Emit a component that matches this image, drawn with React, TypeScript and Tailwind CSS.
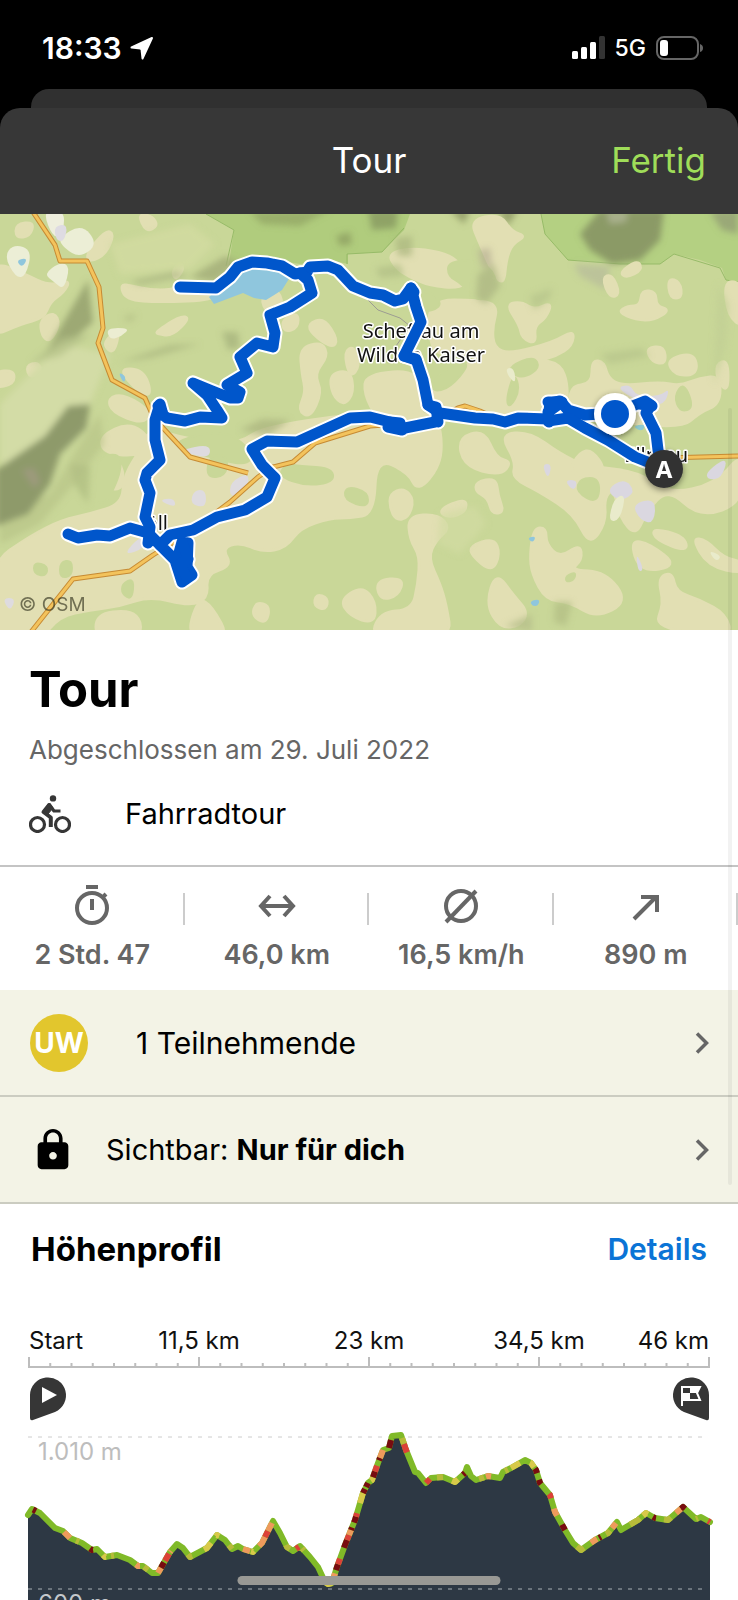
import type { ReactNode } from 'react';
import { MdLock } from 'react-icons/md';

// ─── MAP DATA ───

const GREEN = '#c9d798';
const BEIGE = '#e2dfb3';

const softShapes: { fill: string; d: string; opacity?: number }[] = [
  { fill: '#d3dca6', d: 'M0 190L60 130L110 140L90 190L40 240L0 250Z' },
  { fill: '#d0da9f', d: 'M110 30L190 10L215 30L190 55L120 60Z' },
  { fill: '#98a470', d: 'M45 140L88 66L93 108L75 124Z', opacity: 0.9 },
  { fill: '#b4c087', d: 'M30 150L60 124L92 120L60 142Z', opacity: 0.7 },
  { fill: '#a3ad78', d: 'M190 63L225 42L240 48L215 68Z', opacity: 0.8 },
  { fill: '#a9b580', d: 'M130 67L175 57L190 62L140 71Z', opacity: 0.7 },
  { fill: '#aab67f', d: 'M120 148L170 131L200 130L150 144Z', opacity: 0.7 },
  { fill: '#a4b07a', d: 'M222 118L238 118L240 134L228 136Z', opacity: 0.7 },
  { fill: '#b6c288', d: 'M124 102L136 100L134 106L126 108Z', opacity: 0.8 },
  { fill: '#b6c286', d: 'M50 280L80 230L100 200L104 230L74 270L40 310L0 330L0 300Z', opacity: 0.6 },
  { fill: '#8e9a6b', d: 'M-4 256L45 222L68 192L90 190L86 214L60 240L50 270L28 300L-4 312Z' },
  { fill: '#a19a82', d: 'M22 256L34 254L40 268L34 274Z', opacity: 0.8 },
  { fill: '#b2bf83', d: 'M70 250L90 252L88 290L74 270Z', opacity: 0.8 },
  { fill: '#a9b380', d: 'M478 60L494 50L500 72L486 90L476 84Z', opacity: 0.7 },
  { fill: '#b0a98f', d: 'M478 36L490 34L492 52L482 54Z', opacity: 0.6 },
  { fill: '#a9b57d', d: 'M395 24L412 22L412 42L398 42Z', opacity: 0.7 },
  { fill: '#b1bd84', d: 'M376 54L400 50L404 62L380 64Z', opacity: 0.7 },
  { fill: '#b7c48a', d: 'M530 82L552 74L550 84L534 96Z', opacity: 0.7 },
  { fill: '#b7c48a', d: 'M600 140L640 134L650 142L610 150Z', opacity: 0.7 },
  { fill: '#a9b47e', d: 'M240 216L262 205L290 206L268 222Z', opacity: 0.7 },
  { fill: '#b4bf86', d: 'M555 388L572 388L566 412L554 408Z', opacity: 0.8 },
  { fill: '#b8bf8c', d: 'M505 412L532 400L532 418Z', opacity: 0.8 },
  { fill: '#d2dba2', d: 'M440 300L475 292L486 310L460 340L438 330Z', opacity: 0.7 },
  { fill: '#c2cf95', d: 'M718 70L728 90L726 130L714 170L716 110Z', opacity: 0.8 },
];

const beigePatches = [
  'M-10 46L24 60L50 72L70 66L64 78L50 88L44 104L20 110L-10 124Z',
  'M16 10L34 8L30 22L16 24Z',
  'M40 106L54 98L60 110L50 128L42 122Z',
  'M120 70L132 72L150 76L172 76L186 70L215 76L214 86L160 88L126 86Z',
  'M156 118L180 102L190 104L172 122L158 120Z',
  'M172 58L180 48L184 54L176 66Z',
  'M138 0L152 2L158 12L146 18Z',
  'M86 40L106 16L114 20L106 40L90 48Z',
  'M-6 158L14 156L14 170L-6 174Z',
  'M26 152L38 148L42 158L30 164Z',
  'M108 124L120 114L114 140L104 132Z',
  'M118 154L144 156L152 182L138 178Z',
  'M108 184L124 180L152 198L142 210L112 198Z',
  'M100 222L130 208L152 226L142 242L104 240Z',
  'M102 246L122 248L124 276L104 274Z',
  'M308 110L324 104L338 126L332 134L312 120Z',
  'M300 134L322 128L328 142L314 160L322 178L310 204L298 196L306 178L302 160Z',
  'M330 160L350 156L354 178L344 192L332 180Z',
  'M344 138L354 132L360 152L350 164Z',
  'M260 84L276 74L284 90L268 100Z',
  'M282 106L298 98L298 114L284 118Z',
  'M388 40L410 34L440 38L458 46L468 66L460 74L430 72L408 62L396 54Z',
  'M470 6L500 0L512 18L526 22L512 30L506 46L504 70L494 62L480 30Z',
  'M506 90L522 88L534 96L552 88L546 104L534 112L536 130L522 124L520 112Z',
  'M618 98L628 92L640 92L642 76L656 78L656 92L670 96L654 106L636 106Z',
  'M602 64L612 60L620 80L610 84Z',
  'M620 58L638 46L642 56L626 64Z',
  'M668 64L680 68L682 84L670 84Z',
  'M646 134L664 132L666 150L652 148Z',
  'M666 146L694 138L698 160L676 162Z',
  'M724 66L744 70L744 114L728 102Z',
  'M716 150L728 146L728 178L718 168Z',
  'M592 146L604 148L608 164L622 172L660 168L680 172L700 164L720 162L720 190L700 198L680 216L570 200L570 172L592 170Z',
  'M428 86L480 86L498 92L492 114L494 134L510 140L554 128L574 116L572 132L556 142L540 146L560 150L568 170L566 204L500 206L440 200L424 180L440 176L456 160L470 148L480 140L440 142L430 130Z',
  'M366 160L420 156L432 200L378 206L364 180Z',
  'M-10 426L-10 350L30 322L62 306L90 300L122 290L124 262L140 236L150 214L190 226L240 230L260 214L350 200L434 196L442 222L440 252L418 278L408 258L376 244L374 300L350 304L330 304L300 314L286 334L262 338L240 328L222 334L232 352L206 360L208 384L190 392L150 382L120 392L90 396L60 402L40 426Z',
  'M96 400L130 396L142 408L138 426L96 426Z',
  'M198 384L212 392L230 426L186 426Z',
  'M256 388L270 392L266 410L252 402Z',
  'M316 380L328 384L326 396L314 392Z',
  'M340 386L362 372L376 388L374 410L350 402Z',
  'M458 224L484 216L496 244L512 248L500 262L464 252Z',
  'M476 268L496 264L498 282L504 298L492 300L488 284L476 278Z',
  'M390 280L404 274L414 286L408 304L396 306L390 294Z',
  'M438 296L466 284L466 298L448 304Z',
  'M408 302L438 300L450 314L436 326L428 344L440 370L446 390L452 426L370 426L380 398L412 396L418 370L420 342L410 326Z',
  'M470 332L494 324L500 340L492 358L472 342Z',
  'M496 358L514 382L528 398L520 412L500 414L486 390Z',
  'M530 340L534 314L546 314L546 330L560 344L580 330L582 346L570 356L606 358L628 388L596 404L570 388L546 386L532 360Z',
  'M500 220L530 218L560 240L586 252L640 258L668 280L716 270L744 236L744 288L700 304L668 274L646 298L636 322L620 304L614 274L604 284L606 308L590 332L574 300L540 278L512 264L516 248Z',
  'M630 326L650 330L678 352L640 358Z',
  'M652 314L684 322L688 338L656 326Z',
  'M658 364L672 358L676 378L700 386L726 400L732 424L654 414L664 390Z',
  'M692 324L706 326L724 344L744 348L744 360L708 352Z',
  'M376 366L404 364L398 382L380 386Z',
  'M580 238L592 236L606 256L592 264L568 258Z',
];

const greenPatches = [
  'M300 252L332 254L334 268L306 272L278 262L286 250Z',
  'M92 246L118 238L122 254L110 284L98 292L88 270Z',
  'M346 272L368 278L368 294L344 286Z',
  'M170 232L196 220L230 218L254 240L246 252L206 242Z',
  'M210 240L228 242L226 262L206 264Z',
  'M34 348L48 352L46 362L34 360Z',
  'M60 348L72 346L72 362L60 364Z',
  'M122 370L134 364L132 386L122 380Z',
  'M448 48L474 46L494 56L498 80L476 88L462 70L448 62Z',
  'M510 152L534 142L540 154L524 164L512 160Z',
  'M434 164L458 148L470 150L450 174L432 178Z',
  'M506 186L514 158L520 176L510 194Z',
  'M684 168L694 194L680 198L674 182Z',
  'M580 264L600 264L598 290L576 278Z',
  'M396 78L430 76L444 92L420 100L396 94Z',
  'M566 362L576 358L574 366L566 368Z',
];

const palePatches: { fill: string; d: string }[] = [
  { fill: '#eceed6', d: 'M4 42L14 30L32 36L26 62L16 64Z' },
  { fill: '#eceed6', d: 'M44 60L60 48L70 52L64 76L54 68Z' },
  { fill: '#eceed6', d: 'M58 24L82 10L98 30L80 44L64 34Z' },
  { fill: '#eeeedd', d: 'M42 -4L64 -4L64 16L54 26Z' },
  { fill: '#ecedd2', d: 'M106 114L130 114L122 122L110 126Z' },
  { fill: '#dedbe2', d: 'M54 12L68 10L64 28L56 26Z' },
  { fill: '#dedbdf', d: 'M230 268L250 258L246 278L230 284Z' },
  { fill: '#dedbdf', d: 'M194 276L206 276L206 294L190 290Z' },
  { fill: '#dedbdf', d: 'M158 286L174 284L176 294Z' },
  { fill: '#dedbdf', d: 'M180 236L210 230L210 244L190 240Z' },
  { fill: '#dedbdf', d: 'M122 342L142 320L146 334Z' },
  { fill: '#dedbdf', d: 'M2 384L16 384L10 398Z' },
  { fill: '#dad7e0', d: 'M606 276L624 264L636 278L620 288Z' },
  { fill: '#dad7e0', d: 'M632 290L656 284L654 310L640 306Z' },
  { fill: '#e9ebcb', d: 'M614 284L626 280L620 306L608 308Z' },
  { fill: '#dad7e0', d: 'M706 258L728 242L722 264L708 266Z' },
  { fill: '#dad7e0', d: 'M542 250L552 250L548 266Z' },
  { fill: '#dad7e0', d: 'M564 266L578 266L574 278Z' },
  { fill: '#dad7e0', d: 'M616 174L630 170L636 182L660 182L670 174L664 192L640 188Z' },
  { fill: '#e9ebcb', d: 'M506 154L514 154L516 170L508 162Z' },
  { fill: '#dad7e0', d: 'M636 338L644 356L638 358Z' },
  { fill: '#e9ebcb', d: 'M708 336L722 342L716 348Z' },
  { fill: '#8fc6dd', d: 'M16 46L28 44L22 54Z' },
  { fill: '#8fc6dd', d: 'M118 158L126 162L124 170Z' },
  { fill: '#8fc6dd', d: 'M530 387L540 385L538 392L532 392Z' },
  { fill: '#8fc6dd', d: 'M527 324L536 322L533 329Z' },
  { fill: '#8fcbd0', d: 'M632 212L646 210L642 218Z' },
];

const roads = [
  'M33 -2L55 31L60 47L87 47L99 73L103 114L98 129L112 166L145 184L152 200L163 214L190 243L248 259',
  'M31 418L73 365L130 357L153 341L190 318L230 288L258 263L273 253L293 248L315 229L370 212L400 210',
  'M440 204L458 194L465 192L480 197L500 206',
  'M664 244L738 242',
];

const routes = [
  'M180 73L216 74L230 63L238 53L252 48L267 49L282 52L295 60L307 58L310 53L328 52L338 56L353 72L370 79L383 81L395 87L403 85L411 74L416 93L421 108L411 128L404 142L416 145L423 166L428 191L440 199L475 204L493 205L505 208L518 204L548 205L550 189L560 187L568 196L585 201L615 199L635 191L645 187L651 191L646 199L656 219L658 236L663 254',
  'M548 207L568 204L585 214L608 226L635 243L663 254',
  'M440 199L435 208L405 214L396 214L390 208L370 203L350 204L297 228L267 227L252 235L262 251L275 264L267 283L245 296L217 303L193 316L170 321L160 331L175 346L182 368L192 361L187 353L188 329L182 328L177 346',
  'M160 331L150 321L148 329L150 313L145 303L150 279L145 266L147 259L160 246L155 226L155 206L160 190L163 201L167 204L185 207L200 203L222 204L217 196L207 181L193 169L210 176L230 184L238 184L240 178L227 171L247 159L240 143L257 129L273 133L275 119L270 101L290 93L312 79L308 66L300 59',
  'M68 320L78 324L97 321L110 322L130 314L148 319',
];

// small scribbles where the track doubles back on itself
const knots = [
  'M411 74L414 78M404 142L416 146M428 191L436 193L438 208M390 208L400 209L402 216L388 213',
  'M548 188L562 188L548 198L549 208M640 190L652 192M183 330L188 345L180 350L186 362M158 192L162 198',
];

// rounds a closed polygon by running quadratic curves through its edge midpoints
const blob = (d: string) => {
  const pts = d.slice(1, -1).split('L').map((p) => p.split(' ').map(Number));
  const mid = (i: number) => {
    const [a, b] = [pts[i % pts.length], pts[(i + 1) % pts.length]];
    return `${(a[0] + b[0]) / 2} ${(a[1] + b[1]) / 2}`;
  };
  return `M${mid(0)}${pts.map((_, i) => {
    const [x, y] = pts[(i + 1) % pts.length];
    return `Q${x} ${y} ${mid(i + 1)}`;
  }).join('')}Z`;
};

function TourMap() {
  return (
    <svg viewBox="0 0 738 416" className="block w-full bg-[#c9d798]" role="img" aria-label="Karte">
      <defs>
        <filter id="soft" x="-20%" y="-20%" width="140%" height="140%">
          <feGaussianBlur stdDeviation="3" />
        </filter>
        <filter id="halo" x="-50%" y="-50%" width="200%" height="200%">
          <feDropShadow dx="0" dy="2" stdDeviation="3" floodOpacity="0.45" />
        </filter>
      </defs>
      <rect width="738" height="416" fill={GREEN} />

      {/* Nature reserves */}
      <path d="M206 0L234 16L228 56L262 44L300 50L330 46L348 50V40L382 38L404 16L410 0Z" fill="#b0cc7d" />
      <path d="M541 0L545 20L568 46L620 50L660 50L674 40L700 46L722 54L726 66L738 68V0Z" fill="#b4d082" />
      <path d="M206 0L234 16L226 52M347 50V40L382 38L404 14M541 0L545 20L568 46L620 50L660 50L674 40L720 54L726 66L738 68" fill="none" stroke="#97bb68" strokeWidth="1" />
      <g filter="url(#soft)">
        <path d="M580 20L600 -4H664L660 26L640 46L612 50L590 36Z" fill="#8b9a66" />
        <path d="M606 -2H628L626 8L610 10Z" fill="#a9b08c" />
        <path d="M710 -2L738 -4V20L722 16Z" fill="#9aa877" />
        <path d="M250 -2L330 -4L300 12L262 10Z" fill="#93a765" opacity="0.8" />
        <path d="M336 22L350 18L352 30L340 32Z" fill="#8fa062" opacity="0.8" />
        <path d="M368 -4L398 -4L396 14L372 16Z" fill="#8fa366" />
        <path d="M574 50L610 52L606 76L580 62Z" fill="#bcc39a" />
        <path d="M450 -4L470 -4L464 10ZM498 -4L518 -4L508 12Z" fill="#98a36d" />
      </g>

      {/* Meadows and woods */}
      <g fill={BEIGE} stroke={BEIGE} strokeWidth="3">
        {beigePatches.map((d) => <path key={d} d={blob(d)} />)}
      </g>
      <g fill={GREEN} stroke={GREEN} strokeWidth="2">
        {greenPatches.map((d) => <path key={d} d={blob(d)} />)}
      </g>
      {palePatches.map((p) => <path key={p.d} d={blob(p.d)} fill={p.fill} />)}
      <g filter="url(#soft)">
        {softShapes.map((p) => <path key={p.d} d={p.d} fill={p.fill} opacity={p.opacity} />)}
      </g>
      <path d="M209 83L221 71L240 52L262 46L284 52L292 60L282 76L266 86L254 84L243 79L214 90Z" fill="#8fc6dd" />
      <path d="M366 84L378 96L400 104L410 112L396 132" fill="none" stroke="#9c9c92" strokeWidth="1" />

      {/* Roads */}
      <g fill="none" strokeLinejoin="round">
        {roads.map((d) => <path key={d} d={d} stroke="#c68a33" strokeWidth="5" />)}
        {roads.map((d) => <path key={d} d={d} stroke="#f3c35c" strokeWidth="3" />)}
      </g>

      {/* Place names */}
      <g fontFamily='"Noto Sans", sans-serif' fontSize="20" fill="#111" stroke="#fff" strokeWidth="3" strokeLinejoin="round" paintOrder="stroke">
        <text x="421" y="124" textAnchor="middle">Scheffau am</text>
        <text x="421" y="148" textAnchor="middle">Wilden Kaiser</text>
        <text x="168" y="316" textAnchor="end">öll</text>
        <text x="688" y="248" textAnchor="end">Ellmau</text>
      </g>

      {/* Track */}
      <g fill="none" strokeLinejoin="round" strokeLinecap="round">
        {[...routes, ...knots].map((d) => <path key={d} d={d} stroke="#fff" strokeWidth="15" />)}
        {[...routes, ...knots].map((d) => <path key={d} d={d} stroke="#0056cb" strokeWidth="11" />)}
      </g>

      <circle cx="615" cy="200" r="21" fill="#fff" filter="url(#halo)" />
      <circle cx="615" cy="200" r="14" fill="#0056cb" />
      <circle cx="664" cy="255" r="19" fill="#333" filter="url(#halo)" />
      <text x="664" y="264" textAnchor="middle" fontFamily='"Noto Sans", sans-serif' fontWeight="700" fontSize="24" fill="#fff">A</text>
      <text x="19" y="397" fontFamily="Inter, sans-serif" fontSize="19" fill="#33331f" fillOpacity="0.65">© OSM</text>
    </svg>
  );
}

// ─── ELEVATION PROFILE ───

const profile: [number, number][] = [
  [28, 195], [32, 189], [40, 193], [55, 208], [63, 211], [70, 218], [82, 223], [92, 230], [97, 229], [105, 237],
  [117, 235], [130, 240], [138, 246], [143, 246], [152, 253], [158, 253], [170, 232], [177, 224], [183, 228],
  [190, 237], [207, 228], [217, 215], [225, 220], [232, 229], [238, 226], [243, 229], [253, 232], [262, 223],
  [273, 201], [280, 213], [287, 227], [293, 231], [300, 226], [310, 237], [318, 247], [325, 262], [328, 264],
  [332, 263], [337, 247], [345, 225], [355, 200], [363, 173], [368, 163], [372, 160], [378, 143], [383, 130],
  [389, 128], [392, 116], [401, 115], [406, 130], [415, 152], [418, 153], [426, 163], [431, 158], [443, 157],
  [455, 162], [465, 153], [467, 147], [471, 156], [476, 160], [488, 156], [500, 158], [503, 152], [511, 148],
  [525, 140], [531, 143], [536, 150], [540, 163], [550, 175], [555, 192], [565, 210], [573, 223], [581, 230],
  [595, 220], [608, 213], [617, 202], [621, 210], [638, 200], [646, 193], [655, 198], [668, 200], [683, 187],
  [696, 199], [701, 197], [710, 202],
];

const grades = {
  easy: '#b7bb3a',
  mild: '#d8c94a',
  steep: '#ee9a5c',
  hard: '#dc4138',
  extreme: '#780c10',
};

const steepParts: [number, number, keyof typeof grades][] = [
  [33, 36, 'extreme'], [64, 70, 'steep'], [76, 79, 'easy'], [90, 93, 'extreme'], [103, 106, 'mild'], [111, 114, 'easy'],
  [136, 140, 'steep'], [144, 148, 'easy'], [158, 161, 'steep'], [161, 164, 'extreme'], [165, 169, 'hard'], [170, 171, 'steep'],
  [188, 192, 'easy'], [204, 211, 'mild'], [216, 219, 'mild'], [229, 232, 'easy'], [243, 250, 'steep'], [251, 254, 'mild'],
  [259, 265, 'steep'], [265, 268, 'hard'], [268, 272, 'steep'], [286, 290, 'easy'], [296, 299, 'hard'], [302, 304, 'easy'],
  [326, 332, 'mild'], [333, 335, 'steep'], [336, 338, 'extreme'], [338, 340, 'hard'], [344, 347, 'extreme'], [347, 349, 'hard'],
  [349, 351, 'steep'], [351, 352, 'extreme'], [354, 356, 'extreme'], [356, 357, 'hard'], [360, 363, 'mild'], [363, 365, 'extreme'],
  [366, 368, 'extreme'], [371, 373, 'mild'], [373, 375, 'extreme'], [375, 377, 'hard'], [379, 380, 'extreme'], [380, 383, 'steep'],
  [389, 391, 'extreme'], [402, 404, 'easy'], [404, 407, 'hard'], [426, 430, 'hard'], [437, 443, 'easy'], [452, 458, 'mild'],
  [463, 465, 'extreme'], [479, 484, 'easy'], [486, 491, 'steep'], [505, 508, 'easy'], [511, 520, 'mild'], [530, 534, 'mild'],
  [535, 537, 'extreme'], [539, 541, 'extreme'], [549, 551, 'hard'], [554, 557, 'steep'], [562, 565, 'extreme'],
  [577, 584, 'easy'], [591, 597, 'steep'], [599, 601, 'extreme'], [606, 610, 'easy'], [612, 616, 'steep'], [630, 640, 'easy'],
  [643, 648, 'mild'], [653, 656, 'extreme'], [664, 671, 'easy'], [676, 681, 'steep'], [681, 685, 'extreme'], [696, 698, 'easy'],
  [708, 710, 'hard'],
];

const heightAt = (x: number) => {
  const i = Math.max(1, profile.findIndex(([px]) => px >= x));
  const [x0, y0] = profile[i - 1];
  const [x1, y1] = profile[i];
  return y0 + ((y1 - y0) * (x - x0)) / (x1 - x0);
};

const partPoints = (from: number, to: number) =>
  [[from, heightAt(from)], ...profile.filter(([x]) => x > from && x < to), [to, heightAt(to)]].join(' ');

const axisLabels: { x: number; text: string; anchor: 'start' | 'middle' | 'end' }[] = [
  { x: 29, text: 'Start', anchor: 'start' },
  { x: 199, text: '11,5 km', anchor: 'middle' },
  { x: 369, text: '23 km', anchor: 'middle' },
  { x: 539, text: '34,5 km', anchor: 'middle' },
  { x: 709, text: '46 km', anchor: 'end' },
];

const ticks = Array.from({ length: 33 }, (_, i) => ({ x: 29 + i * 21.25, major: i % 8 === 0 }));

function ElevationChart() {
  const line = profile.join(' ');
  return (
    <svg viewBox="0 0 738 320" className="block w-full" fontFamily="Inter, sans-serif" fontSize="24" role="img" aria-label="Höhenprofil">
      {axisLabels.map((l) => (
        <text key={l.text} x={l.x} y="29" textAnchor={l.anchor} fill="#111">{l.text}</text>
      ))}
      <g stroke="#bdbdbd" strokeWidth="2">
        <path d="M28 47H710" />
        {ticks.map((t) => <path key={t.x} d={`M${t.x} 47V${t.major ? 37 : 43}`} />)}
      </g>

      {/* Start and finish pins */}
      <path d="M30 75A18 18 0 1 1 55 92L33 100Q30 101 30 98Z" fill="#363636" />
      <path d="M42 67V83L57 75Z" fill="#fff" />
      <path d="M709 75A18 18 0 1 0 684 92L706 100Q709 101 709 98Z" fill="#363636" />
      <path d="M682 66V86M682 67H700L697 73L700 80H682" fill="none" stroke="#fff" strokeWidth="2" />
      <path d="M690 67H700L697 73H690ZM683 73H690V80H683Z" fill="#fff" />

      <path d="M28 117H706" stroke="#ccc" strokeWidth="1" strokeDasharray="4 6" />
      <text x="38" y="140" fill="#bdbdbd">1.010 m</text>
      <polygon points={`28,320 ${line} 710,320`} fill="#2d3844" />
      <path d="M28 269H706" stroke="#aab0b5" strokeWidth="1" strokeDasharray="4 6" />
      <text x="38" y="292" fill="#c4c8cc">600 m</text>

      <g fill="none" strokeWidth="6" strokeLinejoin="round">
        <polyline points={line} stroke="#80ba28" strokeLinecap="round" />
        {steepParts.map(([from, to, grade]) => (
          <polyline key={from} points={partPoints(from, to)} stroke={grades[grade]} />
        ))}
      </g>
    </svg>
  );
}

// ─── ICONS ───

function LocationIcon() {
  return (
    <svg viewBox="0 0 24 24" className="size-6" fill="#fff" stroke="#fff" strokeWidth="2" strokeLinejoin="round" aria-hidden="true">
      <path d="M22 2L12.500 22.500L11.500 13.500L10.500 12.500L1.500 11.500Z" />
    </svg>
  );
}

function SignalIcon() {
  return (
    <svg viewBox="0 0 33 23" className="h-[23px] w-[33px]" fill="#fff" aria-hidden="true">
      <rect y="15" width="6" height="8" rx="1.500" />
      <rect x="9" y="11" width="6" height="12" rx="1.500" />
      <rect x="18" y="6" width="6" height="17" rx="1.500" />
      <rect x="27" width="6" height="23" rx="1.500" fill="#333" />
    </svg>
  );
}

function BatteryIcon() {
  return (
    <svg viewBox="0 0 48 24" className="h-6 w-12" aria-hidden="true">
      <rect x="1" y="1" width="41" height="22" rx="7" fill="none" stroke="#666" strokeWidth="2" />
      <rect x="4" y="4" width="8" height="16" rx="3" fill="#fff" />
      <path d="M44 8Q47 9 47 12T44 16Z" fill="#666" />
    </svg>
  );
}

function BikeIcon() {
  return (
    <svg viewBox="0 0 42 38" className="h-[38px] w-[42px]" fill="none" stroke="#363636" aria-hidden="true">
      <circle cx="8.500" cy="29.500" r="7" strokeWidth="3.200" />
      <circle cx="33.500" cy="29.500" r="7" strokeWidth="3.200" />
      <circle cx="24" cy="3.400" r="3.200" fill="#363636" stroke="none" />
      <path d="M20.500 9.500L14.500 17L21.800 22.500V32" strokeWidth="4" strokeLinejoin="round" />
      <path d="M20 9L25 16H31.500" strokeWidth="3.200" strokeLinejoin="round" />
      <path d="M20 8L24 13L19 19L14 17Z" fill="#363636" strokeWidth="1" />
    </svg>
  );
}

function StatIcon({ children }: { children: ReactNode }) {
  return (
    <svg viewBox="0 0 48 48" className="size-12" fill="none" stroke="#666" strokeWidth="4" aria-hidden="true">
      {children}
    </svg>
  );
}

function Chevron() {
  return (
    <svg viewBox="0 0 14 22" className="h-[22px] w-3.5" fill="none" stroke="#666" strokeWidth="3.500" aria-hidden="true">
      <path d="M2 1.500L11.500 11L2 20.500" />
    </svg>
  );
}

const stats: { value: string; label: string; icon: ReactNode }[] = [
  {
    label: 'Dauer',
    value: '2 Std. 47',
    icon: <><circle cx="25" cy="23" r="15" /><path d="M19 2H31M25 14V25M35 13L39 9" /></>,
  },
  {
    label: 'Distanz',
    value: '46,0 km',
    icon: <path d="M10 21H40M18 11L9 21L18 31M32 11L41 21L32 31" />,
  },
  {
    label: 'Durchschnitt',
    value: '16,5 km/h',
    icon: <><circle cx="25" cy="21" r="15" /><path d="M10 37L40 6" /></>,
  },
  {
    label: 'Bergauf',
    value: '890 m',
    icon: <path d="M13 34L35 12M20 12H36V27" />,
  },
];

// ─── PAGE ───

export default function App() {
  return (
    <div className="relative flex h-screen flex-col overflow-hidden bg-black font-['Inter',sans-serif] text-black">
      {/* Status bar */}
      <div className="flex h-[89px] shrink-0 items-center justify-between pt-1.5 pr-[34px] pl-[42px] text-white">
        <div className="flex items-center gap-2">
          <span className="text-[30px] leading-8 font-semibold">18:33</span>
          <LocationIcon />
        </div>
        <div className="flex items-center gap-2.5">
          <SignalIcon />
          <span className="text-[23px] leading-8 font-medium">5G</span>
          <BatteryIcon />
        </div>
      </div>
      <div className="mx-[31px] h-[19px] shrink-0 rounded-t-[18px] bg-[#303030]" />

      <div className="relative flex-1 bg-black">
        <header className="grid h-[106px] grid-cols-3 items-center rounded-t-[20px] bg-[#373737] px-8 pb-0.5">
          <span className="col-start-2 text-center text-[35px] leading-10 text-white">Tour</span>
          <button type="button" className="justify-self-end text-[35px] leading-10 text-[#9fdd59]">Fertig</button>
        </header>

        <main className="bg-white">
          <TourMap />

          <section className="px-[29px] pt-[30px] pb-[31px]">
            <h1 className="text-[49px] leading-[60px] font-bold">Tour</h1>
            <p className="mt-3.5 text-[26px] leading-8 text-[#666]">Abgeschlossen am 29. Juli 2022</p>
            <div className="mt-7 flex items-center gap-[54px]">
              <BikeIcon />
              <span className="text-[29px] leading-10">Fahrradtour</span>
            </div>
          </section>

          <ul className="flex border-t-2 border-[#c4c4c4] pt-[26px] pb-[19px]">
            {stats.map((stat) => (
              <li key={stat.label} aria-label={stat.label} className="w-1/4">
                <div className="flex h-8 items-center justify-center border-r-2 border-[#ccc]">
                  <StatIcon>{stat.icon}</StatIcon>
                </div>
                <div className="mt-3.5 text-center text-[27px] leading-8 font-semibold text-[#666]">{stat.value}</div>
              </li>
            ))}
          </ul>

          <button type="button" className="flex h-[107px] w-full items-center border-b-2 border-[#cbccc1] bg-[#f3f3e6] pr-[29px] pl-[30px]">
            <span className="flex size-[58px] items-center justify-center rounded-full bg-[#e2c62d] text-[28px] font-bold text-white">UW</span>
            <span className="ml-12 flex-1 text-left text-[30px] leading-10">1 Teilnehmende</span>
            <Chevron />
          </button>
          <button type="button" className="flex h-[107px] w-full items-center border-b-2 border-[#cbccc1] bg-[#f3f3e6] pr-[29px] pl-[30px]">
            <MdLock className="size-[46px]" />
            <span className="ml-[30px] flex-1 text-left text-[29px] leading-10">Sichtbar: <b className="font-bold">Nur für dich</b></span>
            <Chevron />
          </button>

          <section className="pt-[25px]">
            <div className="flex items-center justify-between px-[31px]">
              <h2 className="text-[33px] leading-10 font-bold">Höhenprofil</h2>
              <a href="#details" className="text-[30px] leading-10 font-semibold text-[#0b74d6]">Details</a>
            </div>
            <div className="mt-[51px]">
              <ElevationChart />
            </div>
          </section>
        </main>

        {/* Scroll indicator */}
        <div className="absolute top-[300px] right-1.5 h-[777px] w-1 rounded-full bg-black/5" />
      </div>

      {/* Home indicator */}
      <div className="absolute bottom-[15px] left-1/2 h-[9px] w-[263px] -translate-x-1/2 rounded-full bg-[#999995]" />
    </div>
  );
}
